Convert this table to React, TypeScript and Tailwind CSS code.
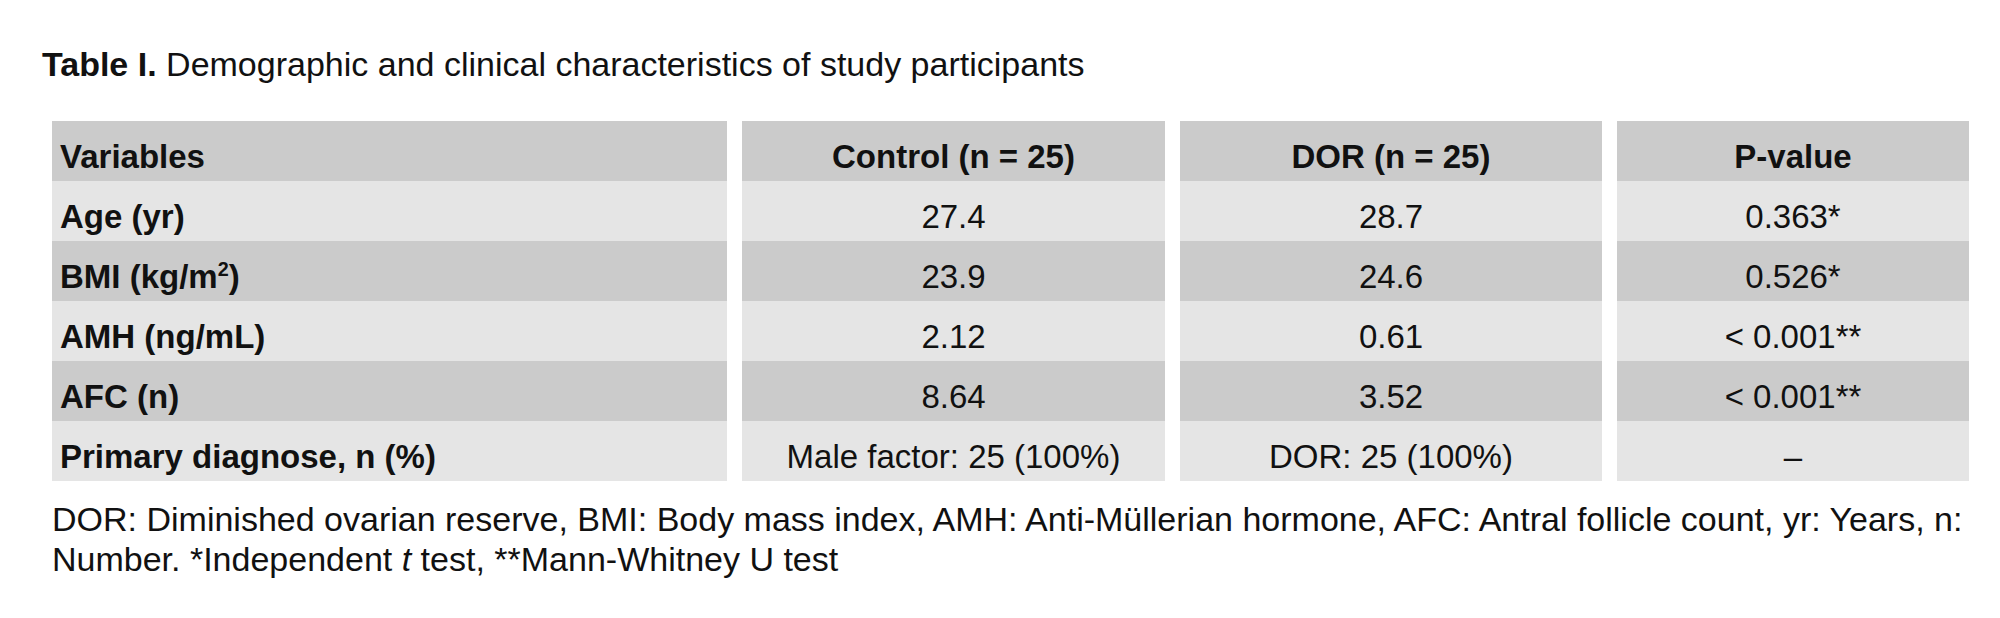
import React from "react";

type Row = { label: React.ReactNode; control: React.ReactNode; dor: React.ReactNode; p: React.ReactNode };

const rows: Row[] = [
  { label: "Age (yr)", control: "27.4", dor: "28.7", p: "0.363*" },
  {
    label: (
      <>
        BMI (kg/m<sup className="text-[0.6em] -top-[0.6em]">2</sup>)
      </>
    ),
    control: "23.9",
    dor: "24.6",
    p: "0.526*",
  },
  { label: "AMH (ng/mL)", control: "2.12", dor: "0.61", p: "< 0.001**" },
  { label: "AFC (n)", control: "8.64", dor: "3.52", p: "< 0.001**" },
  { label: "Primary diagnose, n (%)", control: "Male factor: 25 (100%)", dor: "DOR: 25 (100%)", p: "–" },
];

const dark = "bg-[#cbcbcb]";
const light = "bg-[#e5e5e5]";

function Cell({ children, bg, left, bold }: { children: React.ReactNode; bg: string; left?: boolean; bold?: boolean }) {
  return (
    <div
      className={`h-[60px] pt-[16px] leading-[40px] whitespace-nowrap ${bg} ${left ? "pl-[8px] text-left" : "text-center"} ${
        bold ? "font-bold" : ""
      }`}
    >
      {children}
    </div>
  );
}

export default function App() {
  return (
    <div className="w-[2000px] h-[618px] bg-white text-[#111] font-['Liberation_Sans',Arial,sans-serif] overflow-hidden">
      <div className="pl-[42px] pt-[44px] text-[34px] leading-[40px]">
        <span className="font-bold">Table I.</span> Demographic and clinical characteristics of study participants
      </div>

      <div className="mt-[37px] ml-[52px] grid grid-cols-[675px_423px_422px_352px] gap-x-[15px] text-[33px]">
        <Cell bg={dark} left bold>
          Variables
        </Cell>
        <Cell bg={dark} bold>
          Control (n = 25)
        </Cell>
        <Cell bg={dark} bold>
          DOR (n = 25)
        </Cell>
        <Cell bg={dark} bold>
          P-value
        </Cell>

        {rows.map((r, i) => {
          const bg = i % 2 === 0 ? light : dark;
          return (
            <React.Fragment key={i}>
              <Cell bg={bg} left bold>
                {r.label}
              </Cell>
              <Cell bg={bg}>{r.control}</Cell>
              <Cell bg={bg}>{r.dor}</Cell>
              <Cell bg={bg}>{r.p}</Cell>
            </React.Fragment>
          );
        })}
      </div>

      <p className="ml-[52px] mt-[18px] text-[34px] leading-[40px] whitespace-nowrap">
        DOR: Diminished ovarian reserve, BMI: Body mass index, AMH: Anti-Müllerian hormone, AFC: Antral follicle count, yr: Years, n:
        <br />
        Number. *Independent <i>t</i> test, **Mann-Whitney U test
      </p>
    </div>
  );
}
